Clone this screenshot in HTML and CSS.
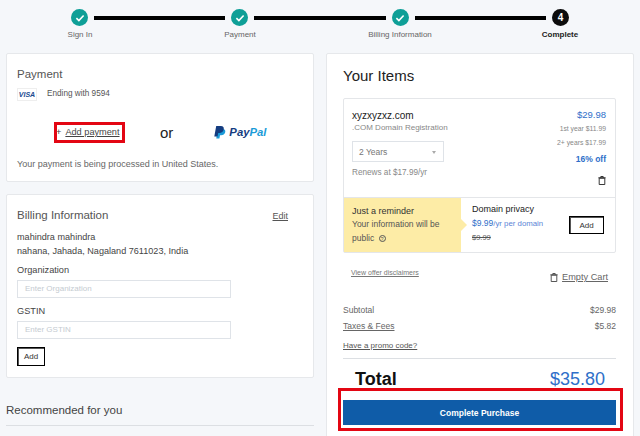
FILE: index.html
```html
<!DOCTYPE html>
<html lang="en">
<head>
<meta charset="utf-8">
<title>Checkout</title>
<link rel="stylesheet" href="styles.css">
</head>
<body>
<div class="track">
  <span class="dot"><svg class="check" viewBox="0 0 12 10"><path d="M1.5 5.2 4.6 8.2 10.5 1.8"/></svg></span><span class="bar"></span>
  <span class="dot"><svg class="check" viewBox="0 0 12 10"><path d="M1.5 5.2 4.6 8.2 10.5 1.8"/></svg></span><span class="bar"></span>
  <span class="dot"><svg class="check" viewBox="0 0 12 10"><path d="M1.5 5.2 4.6 8.2 10.5 1.8"/></svg></span><span class="bar"></span>
  <span class="dot dot-now">4</span>
</div>
<div class="labels">
  <span>Sign In</span><span>Payment</span><span>Billing Information</span><span class="label-now">Complete</span>
</div>
<main class="cols">
  <div class="col-left">
    <section class="card pay">
      <h2 class="h-sm">Payment</h2>
      <div class="visa-row"><span class="visa">VISA</span><span>Ending with 9594</span></div>
      <div class="methods">
        <div class="add-box"><span class="plus">+</span><a class="ul">Add payment</a></div>
        <span class="or">or</span>
        <div class="paypal">
          <svg class="pp" viewBox="0 0 12 13"><path fill="#1b9bd8" d="M3.6 3h5.6c2 .3 2.4 1.8 2 3.3-.5 2-2 2.9-4 2.9H6l-.6 3.3H2.300z"/><path fill="#143c80" d="M2.200 0h4.700c2.300 0 3.300 1.300 2.800 3.400-.5 2.300-2 3.500-4.300 3.500H4.200l-.7 3.700H.300z"/></svg>
          <span class="pay-w">Pay</span><span class="pal-w">Pal</span>
        </div>
      </div>
      <p class="note">Your payment is being processed in United States.</p>
    </section>
    <section class="card bill">
      <div class="bill-head"><h2 class="h-sm">Billing Information</h2><a class="ul edit">Edit</a></div>
      <p class="addr">mahindra mahindra</p>
      <p class="addr">nahana, Jahada, Nagaland 7611023, India</p>
      <div class="field-label first">Organization</div>
      <div class="input">Enter Organization</div>
      <div class="field-label">GSTIN</div>
      <div class="input">Enter GSTIN</div>
      <button class="btn btn-left">Add</button>
    </section>
    <h2 class="rec">Recommended for you</h2>
  </div>
  <section class="card items">
    <h1 class="items-title">Your Items</h1>
    <div class="item-card">
      <div class="item-main">
        <div class="item-info">
          <div class="domain">xyzxyzxz.com</div>
          <div class="grey reg">.COM Domain Registration</div>
          <div class="select"><span>2 Years</span><span class="caret"></span></div>
          <div class="grey renew">Renews at $17.99/yr</div>
        </div>
        <div class="item-price">
          <div class="blue price">$29.98</div>
          <div class="grey small">1st year $11.99</div>
          <div class="grey small">2+ years $17.99</div>
          <div class="blue off">16% off</div>
          <svg class="trash" viewBox="0 0 8 9"><path d="M1.200 2.200h5.600v6.300H1.200zM.300 1.800h7.400M2.800 1.800V.5h2.400v1.300"/></svg>
        </div>
      </div>
      <div class="offer">
        <div class="reminder">
          <div class="rem-title">Just a reminder</div>
          <div class="rem-text">Your information will be</div>
          <div class="rem-text">public <span class="help">?</span></div>
        </div>
        <div class="privacy">
          <div class="priv-title">Domain privacy</div>
          <div class="priv-price"><span class="priv-strong">$9.99</span>/yr per domain</div>
          <div class="priv-old">$9.99</div>
        </div>
        <button class="btn btn-offer">Add</button>
      </div>
    </div>
    <div class="links">
      <a class="ul disclaim">View offer disclaimers</a>
      <div class="empty"><svg class="trash trash-sm" viewBox="0 0 8 9"><path d="M1.200 2.200h5.600v6.300H1.200zM.300 1.800h7.400M2.800 1.800V.5h2.400v1.300"/></svg><a class="ul">Empty Cart</a></div>
    </div>
    <div class="sum-row first-row"><span>Subtotal</span><span>$29.98</span></div>
    <div class="sum-row"><a class="ul">Taxes &amp; Fees</a><span>$5.82</span></div>
    <a class="ul promo">Have a promo code?</a>
    <div class="total"><span class="total-l">Total</span><span class="total-v">$35.80</span></div>
    <div class="purchase-box"><button class="purchase">Complete Purchase</button></div>
  </section>
</main>
</body>
</html>
```
FILE: styles.css
```css
* { box-sizing: border-box; }
html, body { margin: 0; height: 436px; overflow: hidden; }
body { background: #f5f7fa; font-family: "Liberation Sans", Arial, sans-serif; color: #444; font-size: 9px; }
h1, h2, p { margin: 0; font-weight: normal; }
.ul { text-decoration: underline; }

.track { display: flex; align-items: center; padding: 9px 71px 0 71px; gap: 6px; height: 26px; }
.dot { width: 17px; height: 17px; border-radius: 50%; background: #0e9f97; flex: none; display: flex; align-items: center; justify-content: center; }
.dot-now { background: #0c0c0c; color: #fff; font-weight: bold; font-size: 10px; }
.check { width: 10px; height: 8px; fill: none; stroke: #fff; stroke-width: 2; }
.bar { flex: 1; height: 4px; background: #000; }
.labels { display: grid; grid-template-columns: repeat(4, 160px); text-align: center; font-size: 8px; color: #666; height: 27px; padding-top: 3px; line-height: 11px; }
.label-now { color: #222; font-weight: bold; }

.cols { display: grid; grid-template-columns: 308px 308px; gap: 12px; padding: 0 6px; }
.card { background: #fff; border: 1px solid #e6e8eb; border-radius: 2px; }
.h-sm { font-size: 11.500px; color: #555; line-height: 14px; }

.pay { height: 129px; padding: 13px 11px 0 10px; }
.visa-row { display: flex; align-items: center; gap: 10px; margin-top: 5px; font-size: 8.200px; color: #555; height: 15px; }
.visa { width: 20px; height: 13px; border: 1px solid #eee; color: #1a4a8f; font: italic bold 7px/11px "Liberation Sans", sans-serif; text-align: center; margin-top: 1px; }
.methods { display: flex; align-items: center; margin-top: 20px; height: 22px; padding-left: 37px; }
.add-box { width: 71px; height: 21px; border: 3px solid #e30613; display: flex; align-items: center; gap: 4px; font-size: 9.200px; color: #444; margin-right: 35px; white-space: nowrap; }
.plus { margin-left: -1px; }
.or { font-size: 15px; color: #222; margin-right: 41px; }
.paypal { display: flex; align-items: center; font: italic bold 11.300px "Liberation Sans", sans-serif; }
.pp { width: 12px; height: 13px; margin-right: 3px; }
.pay-w { color: #143c80; }
.pal-w { color: #1b9bd8; }
.note { margin-top: 16px; font-size: 9px; color: #666; }

.bill { height: 184px; margin-top: 12px; padding: 13px 11px 0 10px; }
.bill-head { display: flex; justify-content: space-between; align-items: flex-start; }
.edit { font-size: 9px; margin: 3px 14px 0 0; color: #555; }
.addr { font-size: 9.100px; line-height: 13.500px; color: #444; }
.bill-head + .addr { margin-top: 9px; }
.field-label { font-size: 9.200px; color: #444; margin-top: 7px; line-height: 12px; }
.field-label.first { margin-top: 6px; margin-bottom: 1px; }
.input { width: 214px; height: 18px; border: 1px solid #dfe3e8; margin-top: 4px; padding-left: 7px; font-size: 8px; line-height: 16px; color: #c5cbd1; }
.btn { background: #fff; border: 1px solid #000; font: 8px "Liberation Sans", sans-serif; color: #333; padding: 0; }
.btn-left { display: block; width: 28px; height: 19px; margin-top: 8px; box-shadow: inset 1px 1px 0 #555; }

.rec { font-size: 11.500px; color: #444; margin-top: 25px; padding-bottom: 8px; border-bottom: 1px solid #dcdfe3; line-height: 14px; height: 23px; }

.items { height: 390px; padding: 13px 17px 0 16px; }
.items-title { font-size: 15px; line-height: 18px; color: #222; }
.item-card { background: #fff; border: 1px solid #e4e6e9; border-radius: 2px; margin-top: 13px; height: 155px; display: flex; flex-direction: column; }
.item-main { flex: 1; display: flex; justify-content: space-between; padding: 11px 9px 0 8px; }
.domain { font-size: 10px; color: #222; line-height: 12px; }
.grey { color: #888; }
.reg { font-size: 8px; line-height: 11px; }
.select { width: 92px; height: 21px; border: 1px solid #dfe3e8; margin-top: 8px; display: flex; align-items: center; justify-content: space-between; padding: 0 7px 0 6px; font-size: 8.500px; color: #777; }
.caret { width: 0; height: 0; border: 2px solid transparent; border-top: 3px solid #aaa; margin-top: 3px; }
.renew { font-size: 8.200px; line-height: 11px; margin-top: 5px; }
.item-price { display: flex; flex-direction: column; align-items: flex-end; margin-top: -1px; }
.blue { color: #2f6fc9; }
.price { font-size: 9.500px; line-height: 12px; }
.small { font-size: 6.800px; line-height: 14px; }
.small:nth-child(2) { margin-top: 1px; }
.off { font-size: 8.500px; font-weight: bold; margin-top: 4px; line-height: 11px; }
.trash { width: 8px; height: 9px; fill: none; stroke: #222; stroke-width: .9; margin-top: 11px; }
.offer { height: 55px; display: flex; border-top: 1px solid #e4e6e9; align-items: stretch; }
.reminder { width: 117px; background: #fdeca6; padding: 6px 0 0 8px; position: relative; color: #555; }
.reminder::after { content: ""; position: absolute; right: -6px; top: 21px; border: 6px solid transparent; border-left-color: #fdeca6; border-right-width: 0; }
.rem-title { font-size: 9px; color: #333; line-height: 14px; }
.rem-text { font-size: 8.500px; line-height: 13.500px; }
.help { display: inline-block; width: 7px; height: 7px; border: 1px solid #555; border-radius: 50%; font-size: 5px; line-height: 6px; text-align: center; margin-left: 2px; }
.privacy { width: 108px; padding: 5px 0 0 11px; }
.priv-title { font-size: 9px; color: #222; line-height: 13px; }
.priv-price { font-size: 7.800px; color: #5a84d6; line-height: 14px; white-space: nowrap; }
.priv-strong { color: #2f6fc9; font-size: 8.500px; }
.priv-old { font-size: 7.500px; color: #555; text-decoration: line-through; line-height: 13px; }
.btn-offer { width: 35px; height: 18px; margin: 18px 0 0 0; box-shadow: inset 1px 1px 0 #555; font-size: 8px; }
.links { display: flex; justify-content: space-between; padding: 0 8px; }
.disclaim { font-size: 7px; color: #777; margin-top: 15px; line-height: 9px; }
.empty { display: flex; align-items: center; gap: 4px; font-size: 9.200px; color: #666; margin-top: 18px; line-height: 12px; }
.trash-sm { margin-top: 0; stroke: #444; }
.sum-row { display: flex; justify-content: space-between; font-size: 8.500px; color: #666; line-height: 11px; }
.first-row { margin-top: 22px; margin-bottom: 5px; }
.promo { display: block; font-size: 8px; color: #555; margin-top: 8px; line-height: 11px; padding-bottom: 7px; border-bottom: 1px solid #dcdfe3; }
.total { display: flex; justify-content: space-between; align-items: center; height: 29px; padding: 11px 11px 0 12px; }
.total-l { font-size: 18px; font-weight: bold; color: #111; }
.total-v { font-size: 18px; color: #2f6fc9; }
.purchase-box { width: 285px; height: 43px; margin-left: -5px; border: 3px solid #e30613; padding: 9px 2px 0; }
.purchase { display: block; width: 273px; height: 25px; background: #0f5ca8; color: #fff; border: none; font: bold 8.500px "Liberation Sans", sans-serif; padding: 0; }
```
